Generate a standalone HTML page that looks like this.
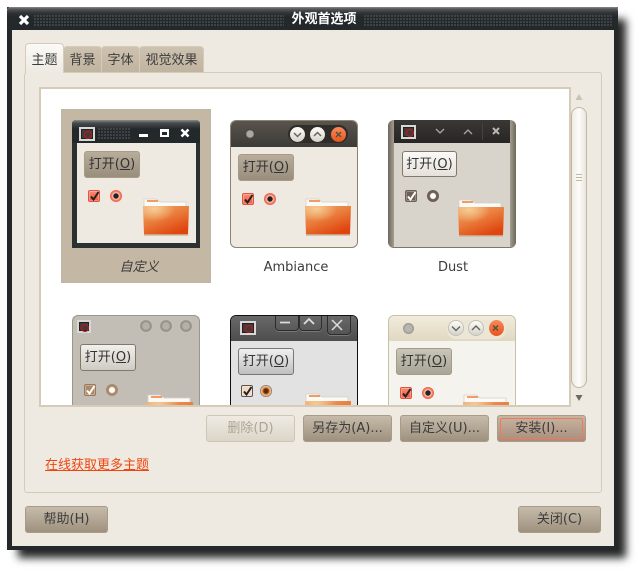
<!DOCTYPE html>
<html><head><meta charset="utf-8">
<style>
html,body{margin:0;padding:0;background:#fff;width:642px;height:574px;overflow:hidden}
*{box-sizing:border-box}
body{font-family:"DejaVu Sans","Noto Sans CJK SC",sans-serif;font-size:13px;color:#3c3c3c}
.a{position:absolute}
#shadow{left:12px;top:13px;width:606px;height:537px;box-shadow:7px 7px 8px 1px rgba(0,0,0,.85);background:#222}
#win{left:7px;top:7px;width:611px;height:543px;background:#23282b;border-radius:4px 4px 0 0}
#tb{left:7px;top:7px;width:611px;height:23px;border-radius:4px 4px 0 0;background:linear-gradient(#8a8a8a 0,#55585a 2px,#2f3335 6px,#23282b 10px)}
.dots{background-image:radial-gradient(circle at 1px 1px,#484c4e 0.9px,transparent 1px);background-size:3px 3px}
#ct{left:12px;top:30px;width:602px;height:516px;background:#eeeae2}
.tab{top:46px;height:27px;background:linear-gradient(#cdc2b0,#c0b39f);border:1px solid #d5cbb8;border-bottom:0;border-radius:4px 4px 0 0;text-align:center;line-height:27px;font-size:13px;color:#3c3c3c}
#nb{left:24px;top:72px;width:578px;height:421px;border:1px solid #d5cbb8;border-radius:3px;background:#eeeae2}
.tab.on{top:43px;height:30px;line-height:33px;background:linear-gradient(#fbfaf7,#eeeae2);border-color:#d5cbb8;z-index:2}
#fr{left:39px;top:87px;width:532px;height:320px;border:2px solid #d5cbb8;background:#fff}
#clip{left:0;top:0;width:642px;height:574px;clip-path:inset(89px 73px 169px 41px)}
.p{position:absolute;width:128px;height:128px;overflow:hidden}
.pb{position:absolute;width:56px;height:27px;border-radius:3px;text-align:center;line-height:26px;font-size:13px;color:#333;border:1px solid #a89c89;background:linear-gradient(#b8ac9b,#998d7c);white-space:nowrap}
.cb{position:absolute;width:12px;height:12px;border-radius:2px;background:linear-gradient(#f98a70,#ec5a44);border:1px solid #e2543e;box-shadow:inset 0 0 0 1px rgba(255,255,255,.3)}
.cb svg{position:absolute;left:0;top:-1px;width:11px;height:12px}
.rd{position:absolute;width:12px;height:12px;border-radius:50%;background:radial-gradient(circle,#222 0 2.4px,#fbd0c4 3px,#f77a60 4.5px,#ee5b45 6px)}
.f{position:absolute;width:46px;height:38px}
.lab{position:absolute;width:150px;text-align:center;font-size:13px;color:#3c3c3c;line-height:16px}
.btn{position:absolute;height:27px;border:1px solid #a89c89;border-radius:3px;background:linear-gradient(#c6bbaa,#9e917e);text-align:center;line-height:26px;font-size:13px;color:#3c3c3c;white-space:nowrap}
u{text-decoration:underline}
.ic{position:absolute;width:16px;height:14px;background:#4c3536;border:2px solid #d8d8d8;box-shadow:inset 0 0 0 1px #222}
.ic:after{content:"";position:absolute;left:calc(50% - 3px);top:calc(50% - 3px);width:6px;height:6px;border-radius:50%;border:1px solid #b02020}
.wb{position:absolute;border-radius:50%}
</style></head><body>
<svg width="0" height="0" style="position:absolute"><defs>
<linearGradient id="fg" x1="0" y1="0" x2="0.6" y2="1"><stop offset="0" stop-color="#f0a468"/><stop offset=".5" stop-color="#ea7d3c"/><stop offset="1" stop-color="#e0450f"/></linearGradient>
<radialGradient id="fh" cx=".25" cy=".1" r=".45"><stop offset="0" stop-color="#f6d29a" stop-opacity=".9"/><stop offset="1" stop-color="#f6d29a" stop-opacity="0"/></radialGradient>
<symbol id="fold" viewBox="0 0 46 38"><path d="M1 1h12l4 3h26v12H1z" fill="#fbfaf6" stroke="#d4d0c8" stroke-width=".8"/><rect x="4" y="2" width="11" height="2" fill="#ef9c68"/><path d="M0 8h46l-1 28.500H1z" fill="url(#fg)"/><path d="M0 8h46l-1 28.500H1z" fill="url(#fh)"/><path d="M1 37h44" stroke="#c9b9a4" stroke-width="1.500"/></symbol>
<symbol id="chk" viewBox="0 0 11 12"><path d="M2 6.500l2.500 3L9.500 2" fill="none" stroke="currentColor" stroke-width="2"/></symbol>
</defs></svg>

<div class="a" id="shadow"></div>
<div class="a" id="win"></div>
<div class="a" style="left:7px;top:7px;width:2px;height:2px;background:#5a2b4a"></div>
<div class="a" style="left:616px;top:7px;width:2px;height:2px;background:#a85a88"></div>
<div class="a" id="tb"></div>
<div class="a dots" style="left:34px;top:15px;width:250px;height:12px"></div>
<div class="a dots" style="left:364px;top:15px;width:248px;height:12px"></div>
<svg class="a" style="left:18px;top:14px" width="12" height="12"><path d="M2 2l8 8M10 2l-8 8" stroke="#fff" stroke-width="3.200"/></svg>
<div class="a" style="left:264px;top:11px;width:120px;text-align:center;color:#fff;font-weight:bold;font-size:13px;line-height:17px">外观首选项</div>
<div class="a" id="ct"></div>

<div class="a tab on" style="left:25px;width:39px">主题</div>
<div class="a tab" style="left:63px;width:39px">背景</div>
<div class="a tab" style="left:101px;width:39px">字体</div>
<div class="a tab" style="left:139px;width:65px">视觉效果</div>
<div class="a" id="nb"></div>
<div class="a" style="left:26px;top:72px;width:36px;height:2px;background:#eeeae2;z-index:3"></div>
<div class="a" id="fr"></div>

<div class="a" id="clip">
 <div class="a" style="left:61px;top:109px;width:150px;height:174px;background:#c4b7a4"></div>

 <!-- custom -->
 <div class="p" style="left:72px;top:120px;background:#2b3033;border-radius:4px 4px 0 0">
  <div class="a" style="left:0;top:0;width:128px;height:23px;background:linear-gradient(#8a8a8a 0,#484c4e 3px,#23282b 9px)"></div>
  <div class="a dots" style="left:26px;top:8px;width:32px;height:11px"></div>
  <div class="a" style="left:5px;top:23px;width:119px;height:100px;background:#eeeae2"></div>
 </div>
 <div class="ic" style="left:79px;top:127px"></div>
 <div class="a" style="left:139px;top:134px;width:9px;height:3px;background:#fff"></div>
 <div class="a" style="left:160px;top:129px;width:9px;height:8px;border:2px solid #fff;border-top-width:3px"></div>
 <svg class="a" style="left:180px;top:128px" width="10" height="10"><path d="M1.500 1.500l7 7M8.500 1.500l-7 7" stroke="#fff" stroke-width="2.600"/></svg>
 <div class="pb" style="left:84px;top:151px">打开(<u>O</u>)</div>
 <div class="cb" style="left:88px;top:190px;color:#222"><svg><use href="#chk"/></svg></div>
 <div class="rd" style="left:110px;top:190px"></div>
 <svg class="f" style="left:143px;top:198px"><use href="#fold"/></svg>
 <div class="lab" style="left:64px;top:260px;font-style:italic">自定义</div>

 <!-- ambiance -->
 <div class="p" style="left:230px;top:120px;background:#eeeae2;border:1px solid #8f8370;border-radius:6px">
  <div class="a" style="left:-1px;top:-1px;width:128px;height:27px;background:linear-gradient(#5a564e,#3c3b37)"></div>
  <div class="a" style="left:57px;top:4px;width:60px;height:18px;border-radius:9px;background:#2e2d2a"></div>
 </div>
 <div class="wb" style="left:245px;top:129px;width:10px;height:10px;background:radial-gradient(circle,#a9a8a4 0 3px,#2a2927 5px)"></div>
 <div class="wb" style="left:290px;top:127px;width:15px;height:15px;background:linear-gradient(#fdfcf9,#d6d2c8)"></div>
 <div class="wb" style="left:310px;top:127px;width:15px;height:15px;background:linear-gradient(#fdfcf9,#d6d2c8)"></div>
 <div class="wb" style="left:331px;top:127px;width:15px;height:15px;background:linear-gradient(#f78a5c,#e95420)"></div>
 <svg class="a" style="left:290px;top:127px" width="56" height="15"><path d="M4 6l3.500 3.500 3.500-3.500M24 9l3.500-3.500 3.500 3.500" fill="none" stroke="#666" stroke-width="1.500"/><path d="M46 5l5 5M51 5l-5 5" stroke="#553" stroke-width="1.500"/></svg>
 <div class="pb" style="left:238px;top:154px">打开(<u>O</u>)</div>
 <div class="cb" style="left:242px;top:193px;color:#222"><svg><use href="#chk"/></svg></div>
 <div class="rd" style="left:264px;top:193px"></div>
 <svg class="f" style="left:305px;top:198px"><use href="#fold"/></svg>
 <div class="lab" style="left:221px;top:260px">Ambiance</div>

 <!-- dust -->
 <div class="p" style="left:388px;top:120px;background:#d8d4cc;border-radius:6px;border-bottom:1px solid #7d7567">
  <div class="a" style="left:0;top:0;width:6px;height:128px;background:linear-gradient(90deg,#6e675c,#a39c8e)"></div>
  <div class="a" style="left:122px;top:0;width:6px;height:128px;background:linear-gradient(90deg,#a39c8e,#6e675c)"></div>
  <div class="a" style="left:6px;top:0;width:116px;height:23px;background:linear-gradient(#3a3835,#272624)"></div>
  <div class="a" style="left:94px;top:3px;width:1px;height:17px;background:#454340"></div>
 </div>
 <div class="ic" style="left:401px;top:125px;width:15px;height:14px"></div>
 <svg class="a" style="left:430px;top:125px" width="80" height="14"><path d="M6 4l4 4 4-4M34 9l4-4 4 4" fill="none" stroke="#aaa69e" stroke-width="1.300"/><path d="M63 3l6 6M69 3l-6 6" stroke="#bbb7ae" stroke-width="2"/></svg>
 <div class="pb" style="left:402px;top:151px;width:55px;height:26px;background:linear-gradient(#fbfaf8,#e6e2da);border-color:#807868">打开(<u>O</u>)</div>
 <div class="cb" style="left:405px;top:190px;background:#6d5f55;border-color:#6d5f55;color:#fff"><svg><use href="#chk"/></svg></div>
 <div class="rd" style="left:427px;top:190px;background:radial-gradient(circle,#fff 0 2.500px,#6d5f55 3.500px)"></div>
 <svg class="f" style="left:458px;top:199px"><use href="#fold"/></svg>
 <div class="lab" style="left:378px;top:260px">Dust</div>

 <!-- theme 4 -->
 <div class="p" style="left:72px;top:315px;background:#c2bdb5;border:1px solid #9b968c;border-radius:6px"></div>
 <div class="ic" style="left:77px;top:320px;width:14px;height:13px"></div>
 <div class="wb" style="left:140px;top:320px;width:12px;height:12px;background:radial-gradient(circle,#b5b0a8 0 3px,#8f8b83 5px,#aaa59d 6px)"></div>
 <div class="wb" style="left:160px;top:320px;width:12px;height:12px;background:radial-gradient(circle,#b5b0a8 0 3px,#8f8b83 5px,#aaa59d 6px)"></div>
 <div class="wb" style="left:180px;top:320px;width:12px;height:12px;background:radial-gradient(circle,#b5b0a8 0 3px,#8f8b83 5px,#aaa59d 6px)"></div>
 <div class="pb" style="left:80px;top:344px;background:linear-gradient(#f2f0ec,#cfcbc4);border-color:#807868">打开(<u>O</u>)</div>
 <div class="cb" style="left:84px;top:384px;background:#ac8a68;border-color:#99795a;color:#fff"><svg><use href="#chk"/></svg></div>
 <div class="rd" style="left:106px;top:384px;background:radial-gradient(circle,#fff 0 2.500px,#ac8a68 3.500px)"></div>
 <svg class="f" style="left:147px;top:394px"><use href="#fold"/></svg>

 <!-- theme 5 -->
 <div class="p" style="left:230px;top:315px;background:#e2e2e2;border:1px solid #111;border-radius:6px">
  <div class="a" style="left:-1px;top:-1px;width:128px;height:26px;background:linear-gradient(#6a6a6a,#4d4d4d)"></div>
  <div class="a" style="left:44px;top:-4px;width:24px;height:19px;border:1px solid #2c2c2c;border-radius:4px;box-shadow:0 1px 0 #777"></div>
  <div class="a" style="left:68px;top:-4px;width:23px;height:19px;border:1px solid #2c2c2c;border-radius:4px;box-shadow:0 1px 0 #777"></div>
  <div class="a" style="left:96px;top:-4px;width:24px;height:23px;border:1px solid #2c2c2c;border-radius:4px;box-shadow:0 1px 0 #777"></div>
 </div>
 <svg class="a" style="left:274px;top:315px" width="80" height="22"><path d="M6 7.500h10M30 9l5-5 5 5" fill="none" stroke="#ddd" stroke-width="1.800"/><path d="M58 5l10 10M68 5L58 15" stroke="#ddd" stroke-width="1.500"/></svg>
 <div class="ic" style="left:240px;top:321px;height:14px"></div>
 <div class="pb" style="left:238px;top:348px;background:linear-gradient(#f0f0f0,#bfbfbf);border-color:#777">打开(<u>O</u>)</div>
 <div class="cb" style="left:241px;top:385px;background:#f5d9bd;border-color:#555;color:#222"><svg><use href="#chk"/></svg></div>
 <div class="rd" style="left:260px;top:385px;background:radial-gradient(circle,#5a2a10 0 2px,#ef8432 3.500px,#f7c89a 4.500px,#666 6px)"></div>
 <svg class="f" style="left:305px;top:393px"><use href="#fold"/></svg>

 <!-- theme 6 -->
 <div class="p" style="left:388px;top:315px;background:#f5f3ed;border:1px solid #c9c0ac;border-radius:6px">
  <div class="a" style="left:-1px;top:-1px;width:128px;height:26px;background:linear-gradient(#f1ecdd,#e1d8c0)"></div>
  <div class="a" style="left:58px;top:4px;width:59px;height:19px;border-radius:9px;background:#ece6d6"></div>
 </div>
 <div class="wb" style="left:403px;top:323px;width:11px;height:11px;background:radial-gradient(circle,#b8b6b0 0 3px,#97948c 5.500px)"></div>
 <div class="wb" style="left:448px;top:320px;width:16px;height:16px;background:linear-gradient(#fdfcf9,#d6d2c8);border:1px solid #c5c0b4"></div>
 <div class="wb" style="left:468px;top:320px;width:16px;height:16px;background:linear-gradient(#fdfcf9,#d6d2c8);border:1px solid #c5c0b4"></div>
 <div class="wb" style="left:489px;top:320px;width:15px;height:16px;background:linear-gradient(#f78a5c,#e95420)"></div>
 <svg class="a" style="left:448px;top:320px" width="56" height="16"><path d="M4 6.500l4 4 4-4M24 10l4-4 4 4" fill="none" stroke="#666" stroke-width="1.500"/><path d="M45 5.500l5 5M50 5.500l-5 5" stroke="#553" stroke-width="1.500"/></svg>
 <div class="pb" style="left:396px;top:348px;background:linear-gradient(#c9c6b9,#a8a597)">打开(<u>O</u>)</div>
 <div class="cb" style="left:400px;top:387px;color:#222"><svg><use href="#chk"/></svg></div>
 <div class="rd" style="left:422px;top:387px"></div>
 <svg class="f" style="left:463px;top:394px"><use href="#fold"/></svg>
</div>

<!-- scrollbar -->
<svg class="a" style="left:574px;top:92px" width="10" height="10"><path d="M5 2l3.500 6h-7z" fill="#c9c3b5"/></svg>
<div class="a" style="left:571px;top:107px;width:16px;height:281px;border:1px solid #c4b7a0;border-radius:8px;background:linear-gradient(90deg,#efece5,#fdfcfa 50%,#e9e5dc)"></div>
<div class="a" style="left:576px;top:174px;width:6px;height:1px;background:#c4b7a0;box-shadow:0 3px 0 #c4b7a0,0 6px 0 #c4b7a0"></div>
<svg class="a" style="left:574px;top:393px" width="10" height="10"><path d="M5 8L1.500 2h7z" fill="#6e6a60"/></svg>

<!-- buttons -->
<div class="btn" style="left:206px;top:415px;width:89px;background:linear-gradient(#efebe3,#dcd5c8);border-color:#cfc6b5;color:#aca594">删除(D)</div>
<div class="btn" style="left:303px;top:415px;width:89px">另存为(A)...</div>
<div class="btn" style="left:400px;top:415px;width:89px">自定义(U)...</div>
<div class="btn" style="left:497px;top:415px;width:89px;background:linear-gradient(#c7b4a2,#a98d7c);padding:0"><div style="border:1px solid #ef7a5c;border-radius:2px;margin:2px;height:21px;line-height:20px">安装(I)...</div></div>
<div class="a" style="left:45px;top:457px;width:104px;height:17px;line-height:17px;color:#f0450e;text-decoration:underline;font-size:13px;white-space:nowrap">在线获取更多主题</div>
<div class="btn" style="left:25px;top:506px;width:83px">帮助(H)</div>
<div class="btn" style="left:518px;top:506px;width:83px">关闭(C)</div>
</body></html>
